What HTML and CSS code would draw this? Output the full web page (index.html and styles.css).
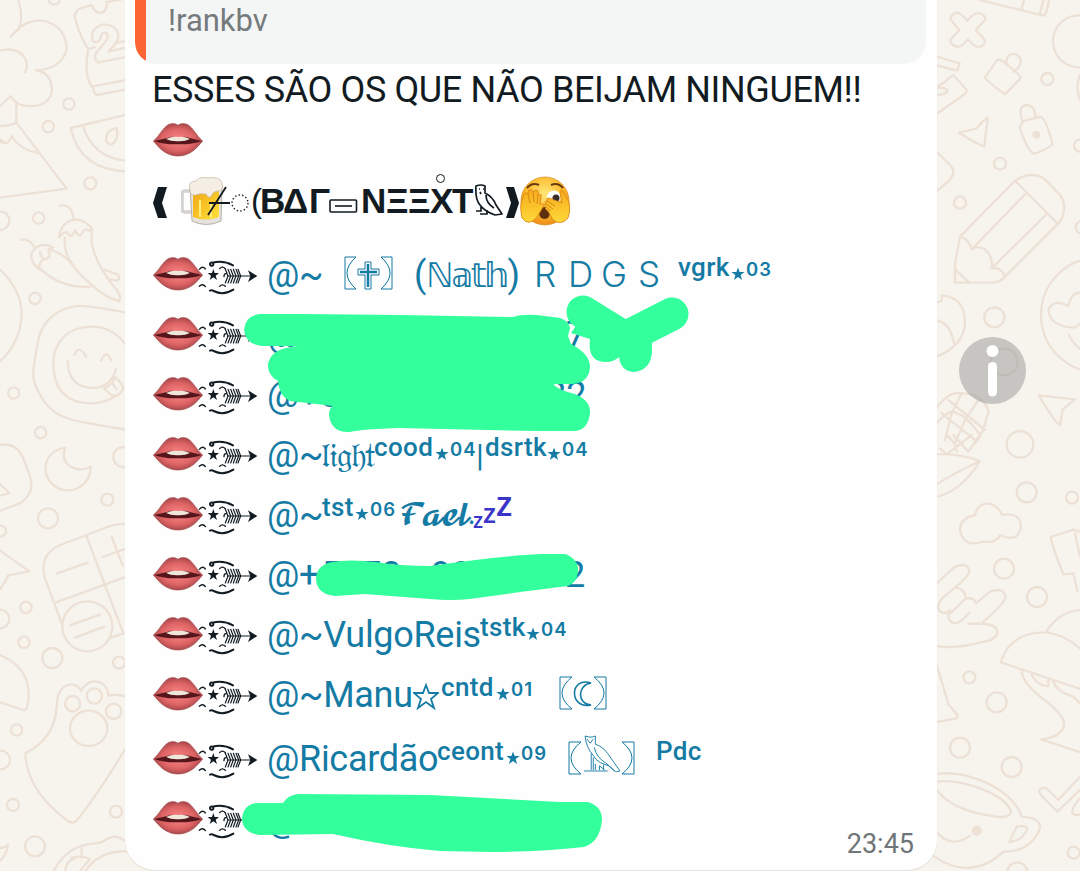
FILE: index.html
```html
<!DOCTYPE html>
<html lang="pt-BR">
<head>
<meta charset="utf-8">
<title>Chat</title>
<link rel="stylesheet" href="styles.css">
</head>
<body>
<svg class="defs" width="0" height="0" aria-hidden="true">
  <defs>
    <radialGradient id="lipg" cx=".5" cy=".5" r=".55"><stop offset="0" stop-color="#f98686"/><stop offset=".6" stop-color="#de6465"/><stop offset="1" stop-color="#9c4044"/></radialGradient>
    <linearGradient id="beerg" x1="0" x2="1" y1="0" y2="1"><stop offset="0" stop-color="#f0a613"/><stop offset="1" stop-color="#ffe23c"/></linearGradient>
    <radialGradient id="faceg" cx=".5" cy=".35" r=".65"><stop offset="0" stop-color="#ffe77a"/><stop offset=".6" stop-color="#fdbb2c"/><stop offset="1" stop-color="#ee8c1a"/></radialGradient>
    <linearGradient id="handg" x1="0" x2="0" y1="0" y2="1"><stop offset="0" stop-color="#f6a91c"/><stop offset="1" stop-color="#ffd93a"/></linearGradient>
    <symbol id="lips" viewBox="38 52 150 102">
      <path d="M39 106C58 92 72 54 95 54Q106 53 113 59Q120 53 131 54C154 54 168 92 187 106C170 126 150 151 113 151S56 126 39 106Z" fill="url(#lipg)" stroke="#9c4548" stroke-width="2"/>
      <path d="M42 106Q76 98 92 93Q113 96 134 93Q155 98 184 106Q155 117 113 116Q70 117 42 106Z" fill="#54161a"/>
      <path d="M77 100Q94 92 113 94Q132 92 149 100Q134 108 113 107Q92 108 77 100Z" fill="#efe6dc"/>
    </symbol>
    <symbol id="arrow" viewBox="174 42 180 123">
      <g fill="none" stroke="#111b21" stroke-width="4" stroke-linecap="round">
        <path d="M178 88Q188 76 196 87M178 139Q188 129 196 140M239 86Q247 77 256 86M239 139Q247 130 256 139M252 110Q252 100 259 101"/>
        <path d="M220 72a5 5 0 1 1-3-4Q250 60 279 76" stroke-width="6"/><path d="M210 152Q216 149 221 153Q250 168 280 149" stroke-width="6"/>
        <path d="M262 108H335" stroke-width="3"/>
        <path d="M256 88l8 20l-8 21M264 88l8 20l-8 21M272 88l8 20l-8 21M280 88l8 20l-8 21M288 88l8 20l-8 21M294 88l8 20l-8 21" stroke-width="3.500"/>
      </g>
      <path d="M324 91L352 108L324 126L331 108ZM220 87l4 12h13l-10 8l4 13l-11-8l-11 8l4-13l-10-8h13z" fill="#111b21"/>
    </symbol>
    <symbol id="star" viewBox="0 0 14 14"><path d="M7 .4l1.600 4.700h5L9.600 8.100l1.500 4.900L7 10.100l-4.100 2.900l1.500-4.900L.4 5.100h5z" fill="currentColor"/></symbol>
    <symbol id="owl" viewBox="0 0 36 36"><path d="M2 1l4 1h3l3-1v8Q19 11 24 18L36 35l-4 1l-7-6l-8-3Q12 24 10 20Q3 12 2 1ZM4 4l3 4l3-4M11 12Q13 22 22 27L31 35M8 18V34M10 22V34M1 35h23M12 34v-6M16 34v-4l5 4M20 29v5" fill="none" stroke="currentColor" stroke-width=".9" stroke-linejoin="round"/></symbol>
  </defs>
</svg>

<svg class="wallpaper" viewBox="0 0 1080 871" aria-hidden="true">
  <g transform="scale(.33333)">
    <path d="M55 0Q72 55 55 88L32 110Q80 50 140 65Q200 85 200 150Q180 210 108 210Q160 220 155 280Q140 320 90 318Q50 320 32 288Q10 310 0 318M0 152Q50 140 72 170Q88 190 76 217M49 305V368L200 566L0 593M0 378Q30 378 50 368M0 424Q25 440 35 408Q60 450 120 460M0 418Q8 420 12 428"/>
    <path d="M275 15L238 26Q222 36 225 55Q240 110 265 148Q250 220 275 260L380 240M275 15Q285 42 305 38Q322 34 320 6L380 -5M280 262Q280 280 290 285L380 268M265 148Q275 142 285 142"/>
    <path d="M278 122Q268 85 310 73Q355 75 355 112Q350 130 325 155L380 142M278 122Q292 134 302 116Q300 98 316 98Q328 104 320 120L288 160Q280 178 295 188L380 170M345 130L380 122"/>
    <path d="M380 344L212 384Q240 510 380 514M248 376Q280 475 380 482M318 415Q320 390 350 384Q358 420 334 434Q318 432 318 415Z"/>
    <circle cx="207" cy="312" r="17"/><circle cx="145" cy="380" r="17"/><circle cx="271" cy="550" r="18"/><circle cx="116" cy="654" r="17"/><circle cx="105" cy="895" r="17"/><circle cx="41" cy="1179" r="17"/><circle cx="0" cy="662" r="28"/><circle cx="163" cy="-3" r="17"/><circle cx="122" cy="1298" r="17"/>
    <path d="M180 617Q215 610 220 655M177 712Q185 660 230 658Q265 665 278 690L265 692Q255 680 243 704Q232 710 225 690Q215 715 207 706Q200 685 177 712ZM195 712Q185 780 270 850Q310 890 358 904Q365 890 350 870Q290 800 275 730V694M315 810L350 822Q365 835 352 842L330 838"/>
    <path d="M62 720Q85 712 103 741M118 808Q85 780 97 755Q112 735 130 735Q150 735 160 743Q140 745 147 755Q155 775 130 778Q122 765 120 755M118 808Q115 790 130 778M120 805Q180 865 270 860M150 748Q185 760 212 785"/>
    <path d="M0 808Q65 870 65 945Q60 1030 0 1084"/>
    <path d="M380 938Q240 910 220 920C150 935 120 980 112 1035C100 1110 85 1135 130 1200Q160 1250 240 1265L380 1290"/>
    <path d="M380 1038Q340 980 275 980C200 980 160 1030 160 1090Q160 1210 275 1210Q320 1208 345 1188M203 1084Q205 1160 275 1164Q335 1162 348 1106M223 1065Q238 1030 258 1070M303 1082Q318 1045 334 1082M312 1165Q345 1150 342 1130Q365 1145 370 1165Q350 1200 330 1182ZM336 1148L348 1166"/>
  </g>
  <g transform="translate(0 435) scale(.33333)">
    <path d="M0 30Q50 20 72 75L90 125Q105 170 65 202L0 228M0 147L28 174L0 182M196 38C130 50 120 115 160 150C210 190 275 150 272 95Q245 110 218 98Q180 80 196 38ZM0 347L88 409L25 421Q15 440 0 463"/>
    <path d="M380 268Q340 265 300 285L180 330Q115 360 135 430L185 565M260 305L370 595L332 608M168 502L380 425M170 416L263 383M308 366L380 340M335 305L368 392M210 571L300 539M225 608L313 575"/>
    <circle cx="262" cy="574" r="75"/><circle cx="144" cy="250" r="30"/><circle cx="322" cy="194" r="18"/><circle cx="370" cy="66" r="30"/><circle cx="78" cy="517" r="17"/><circle cx="72" cy="622" r="17"/><circle cx="157" cy="669" r="30"/><circle cx="357" cy="683" r="18"/><circle cx="50" cy="885" r="17"/><circle cx="39" cy="1110" r="18"/><circle cx="348" cy="1130" r="18"/><circle cx="105" cy="1234" r="30"/><circle cx="2" cy="975" r="28"/><circle cx="0" cy="552" r="28"/><circle cx="2" cy="288" r="16"/>
    <path d="M0 660Q95 700 85 795Q82 830 70 825L0 802M380 935Q280 1100 228 1158Q215 1168 200 1155Q80 1065 76 955Q165 910 170 815Q172 750 215 748Q235 750 243 768Q265 730 300 742Q325 755 325 782Q350 775 380 786"/>
    <circle cx="218" cy="806" r="23"/><circle cx="283" cy="783" r="23"/><circle cx="341" cy="829" r="23"/><ellipse cx="266" cy="880" rx="56" ry="53"/>
    <path d="M160 1310Q200 1230 285 1225Q305 1225 320 1212Q345 1195 380 1220M245 1240V1268M215 1268Q245 1260 270 1272L240 1308M255 1310Q300 1240 400 1250M195 1310Q200 1275 225 1270M0 1238Q18 1240 24 1228Q20 1260 0 1277"/>
  </g>
  <g transform="translate(925 0) scale(.33333)">
    <path d="M165 0L355 47Q365 45 372 0M290 25L297 0M345 40L355 0"/>
    <path d="M78 60Q70 50 95 38Q105 35 127 62Q150 35 165 40Q188 50 178 62L152 90L178 118Q185 135 160 142Q150 142 128 118Q110 142 95 140Q70 130 78 118L103 90Z"/>
    <path d="M30 168L104 190L97 212L30 195M30 345L120 282Q130 272 118 262L85 225L60 245L30 265M30 285Q65 285 68 270Q55 260 30 265M215 182L180 232Q180 240 240 283L286 235Q290 225 225 178ZM243 190Q245 160 270 162Q300 175 278 205L265 215M188 354L178 438Q165 438 102 398L155 385Q180 355 188 354ZM300 362L345 350Q362 352 382 430Q385 440 330 461Q310 460 285 385Q285 370 300 362ZM293 365Q275 315 308 315Q330 318 332 352M30 450L75 495Q95 515 75 540L30 578"/>
    <circle cx="334" cy="404" r="8" fill="#ede1d6"/><circle cx="367" cy="237" r="18"/><circle cx="225" cy="491" r="18"/><circle cx="105" cy="608" r="18"/><circle cx="208" cy="952" r="30"/><circle cx="462" cy="124" r="78"/><circle cx="465" cy="437" r="18"/><circle cx="470" cy="682" r="18"/><circle cx="238" cy="1086" r="40"/>
    <path d="M465 225Q450 260 465 300M90 848V790L105 710L270 542Q320 510 360 538L405 585Q430 620 405 665L235 835Q225 845 210 847ZM270 542L400 673M300 583L140 748Q130 715 105 710M140 748Q155 735 180 748Q205 770 200 805L362 645M200 805Q230 800 240 830M90 808L130 845M30 905Q55 910 50 887Q120 890 120 970Q115 1040 30 1072M30 960Q75 965 87 1030"/>
    <circle cx="520" cy="945" r="172"/><path d="M475 880Q440 870 430 918Q385 895 370 930Q375 980 450 983L480 960M432 1005Q450 1040 475 1053"/>
    <path d="M341 1186L450 1198L413 1228L405 1275Q395 1275 341 1186ZM30 1230Q70 1170 115 1180Q150 1180 170 1202Q200 1230 185 1250Q180 1290 150 1330M30 1275Q60 1240 80 1235Q120 1240 165 1305M70 1200L180 1290M50 1240L150 1320M110 1180L80 1240L60 1320M160 1200L120 1260L90 1330"/>
  </g>
  <g transform="translate(840 435) scale(.33333)">
    <path d="M280 60Q340 50 420 78Q360 175 280 187M420 78Q330 120 280 155M300 40L320 58L395 0M340 0L385 50L420 0M320 0Q350 25 350 50"/>
    <circle cx="540" cy="28" r="40"/><circle cx="560" cy="172" r="30"/><circle cx="696" cy="188" r="18"/><circle cx="492" cy="401" r="30"/><circle cx="591" cy="486" r="30"/><circle cx="388" cy="727" r="18"/><circle cx="470" cy="802" r="30"/><circle cx="360" cy="938" r="30"/><circle cx="515" cy="996" r="30"/><circle cx="701" cy="1253" r="18"/><circle cx="532" cy="1312" r="30"/>
    <path d="M405 240Q412 205 445 206Q475 210 486 240Q540 230 543 275Q535 325 480 300Q470 325 430 320Q370 340 360 285Q360 250 405 240ZM720 290L700 284L632 306Q635 330 670 418L700 415L712 468M720 365L705 295"/>
    <path d="M285 450L345 395Q385 380 388 410Q380 430 345 458L310 487Q285 510 300 530Q320 540 330 525M345 458Q375 460 378 490L325 540Q325 565 350 565Q370 555 388 533M378 490Q400 485 408 505L450 470Q490 455 497 485Q495 505 430 560M385 567Q470 560 472 590Q470 615 430 620Q340 645 285 632"/>
    <path d="M620 588Q660 525 730 525M482 682Q510 590 620 592Q680 600 730 650M482 682L730 765M545 710Q550 750 620 800Q670 840 672 865Q672 905 604 913L730 955M575 720Q595 755 625 753L625 735M640 740Q650 770 700 785L725 810M290 690Q315 770 325 808L352 840Q355 852 340 852L285 862"/>
    <path d="M285 1018C370 1000 520 1060 545 1145Q610 1150 598 1185Q570 1250 490 1250C430 1310 350 1315 280 1262M285 1040C370 1030 500 1080 513 1130Q510 1150 470 1145Q340 1130 290 1065M285 1185Q330 1245 390 1202M508 1222L530 1175Q560 1170 562 1180Q550 1215 508 1222ZM597 1070Q600 1055 620 1060L655 1095L730 1015M597 1070Q600 1080 652 1130L730 1055M730 1080Q690 1120 698 1135Q705 1145 730 1135"/>
    <circle cx="410" cy="1187" r="12" fill="#ede1d6"/>
  </g>
</svg>

<main class="bubble">
  <div class="quote"><p>!rankbv</p></div>
  <p class="headline">ESSES SÃO OS QUE NÃO BEIJAM NINGUEM!!</p>
  <div class="kiss"><svg class="lips"><use href="#lips"/></svg></div>
  <div class="title">
    <svg class="edge" width="15" height="32" viewBox="0 0 15 32"><path d="M5 0h9L9 16L14 31H5L0 16Z" fill="#111b21"/></svg>
    <svg class="beer" width="75" height="50" viewBox="0 0 75 50">
      <path d="M11 15H4Q1 15 1 18V33Q1 36 4 36H11" fill="none" stroke="#d3d2cf" stroke-width="3.500"/>
      <path d="M9 10H41L40 45Q25 52 11 45Z" fill="#e6e3dc" stroke="#b5afa7"/>
      <path d="M12 15H38V41Q25 46 12 41Z" fill="url(#beerg)"/>
      <path d="M19 24V41M30 26V42" stroke="#ffef7c" stroke-width="2"/>
      <path d="M9 14Q6 5 15 5Q19 0 26 2Q39 0 41 7Q43 14 38 15Q32 15 31 19Q28 24 25 18Q19 17 15 19Q9 20 9 14Z" fill="#f4eee4" stroke="#c9bca9" stroke-width=".8"/>
      <path d="M28 27H49M27 39L45 11" stroke="#111b21" stroke-width="1.800"/><circle cx="59" cy="27" r="8" fill="none" stroke="#111b21" stroke-width="1.400" stroke-dasharray="1.400 2.200"/>
    </svg>
    <span class="paren">(</span><span>B</span><span>Δ</span><span>Γ</span>
    <svg class="plate" width="29" height="15" viewBox="0 0 29 15"><rect x="1" y="1" width="26.500" height="12" rx="1" fill="none" stroke="#111b21" stroke-width="1.600"/><path d="M6 7H23" stroke="#111b21" stroke-width="1.600"/></svg>
    <span>N</span><span>Ξ</span><span>Ξ</span><span class="ring">X</span><span>T</span>
    <svg class="bird" width="29" height="33" viewBox="0 0 29 33"><path d="M2 2Q7 0 11 2V9Q19 13 22 21L28 30L21 31Q10 27 6 21Q1 15 2 2ZM5 5h1M9 5h1M6 8l1 2M12 11Q12 19 20 24M7 23V27H2M13 26V30H6" fill="none" stroke="#111b21" stroke-width="1.700" stroke-linejoin="round"/></svg>
    <svg class="edge" width="16" height="32" viewBox="0 0 16 32"><path d="M1 0h8L14 16L9 31H1L6 16Z" fill="#111b21"/></svg>
    <svg class="peek" width="50" height="50" viewBox="0 0 50 50">
      <circle cx="25" cy="25" r="24" fill="url(#faceg)" stroke="#d98a25" stroke-width=".7"/>
      <path d="M7 12Q12 6 19 9M31 9Q38 6 43 12" fill="none" stroke="#6a3b10" stroke-width="2.200"/>
      <ellipse cx="34" cy="21" rx="7" ry="6.500" fill="#fff"/><circle cx="36" cy="22" r="3.500" fill="#362b27"/>
      <ellipse cx="24.500" cy="37" rx="5.500" ry="6" fill="#5e3010"/>
      <path d="M2 42Q-1 28 3 22L4 18Q6 15 8 18L9 14Q12 12 13 16L16 14Q19 14 18 19Q22 17 21 21L20 28Q26 27 23 31L17 41Q9 51 2 42ZM48 42Q52 30 47 22L43 15Q40 13 40 17L42 27L29 22Q26 22 27 25Q24 25 26 28Q23 28 26 31Q24 33 28 35L33 44Q41 50 48 42Z" fill="url(#handg)" stroke="#d98713" stroke-width=".9"/>
      <path d="M8 18L10 27M13 16L14 26M18 19L17 28M27 25L35 30M26 28L33 33M26 31L31 35" fill="none" stroke="#d98713"/>
    </svg>
  </div>

  <ul class="rank">
    <li><svg class="lips"><use href="#lips"/></svg><svg class="arrow"><use href="#arrow"/></svg>
      <div class="name n1"><span>@~</span>
        <svg width="51" height="34" viewBox="0 0 51 34" class="box"><path d="M13 1H2V33H13Q-5 17 13 1ZM38 1H49V33H38Q56 17 38 1Z"/><path d="M22 6h6v7h8v6h-8v14h-6V19h-7v-6h7z"/><path d="M25 8V31M17 16H34" stroke-width="2.500"/></svg>
        <span class="dbl"><i>(</i><em>ℕ𝕒𝕥𝕙</em><i>)</i></span><span class="wide"><b>R</b><b>D</b><b>G</b><b>S</b></span><span class="sup">vgrk</span><svg class="star"><use href="#star"/></svg><span class="num">03</span></div></li>
    <li><svg class="lips"><use href="#lips"/></svg><svg class="arrow"><use href="#arrow"/></svg>
      <div class="name n2"><span>@</span><span>7</span></div></li>
    <li><svg class="lips"><use href="#lips"/></svg><svg class="arrow"><use href="#arrow"/></svg>
      <div class="name n3"><span>@+5</span><span>22</span></div></li>
    <li><svg class="lips"><use href="#lips"/></svg><svg class="arrow"><use href="#arrow"/></svg>
      <div class="name n4"><span>@~</span><span class="frak">𝔩𝔦𝔤𝔥𝔱</span><span class="sup">cood</span><svg class="star"><use href="#star"/></svg><span class="num">04</span><span class="bar">|</span><span class="sup">dsrtk</span><svg class="star"><use href="#star"/></svg><span class="num">04</span></div></li>
    <li><svg class="lips"><use href="#lips"/></svg><svg class="arrow"><use href="#arrow"/></svg>
      <div class="name n5"><span>@~</span><span class="sup">tst</span><svg class="star"><use href="#star"/></svg><span class="num">06</span><span class="script">𝓕𝓪𝓮𝓵.</span><span class="zzz"><i>z</i><i>z</i><i>z</i></span></div></li>
    <li><svg class="lips"><use href="#lips"/></svg><svg class="arrow"><use href="#arrow"/></svg>
      <div class="name n6"><span>@+</span><span>5</span><span>73</span><span>99</span><span>2</span></div></li>
    <li><svg class="lips"><use href="#lips"/></svg><svg class="arrow"><use href="#arrow"/></svg>
      <div class="name n7"><span>@~VulgoReis</span><span class="sup">tstk</span><svg class="star"><use href="#star"/></svg><span class="num">04</span></div></li>
    <li><svg class="lips"><use href="#lips"/></svg><svg class="arrow"><use href="#arrow"/></svg>
      <div class="name n8"><span>@~Manu</span><svg width="26" height="28" viewBox="0 0 26 28" class="hollow"><path d="M13 3l3 8h9l-7 6l3 9l-8-6l-8 6l3-9l-7-6h9z"/></svg><span class="sup">cntd</span><svg class="star"><use href="#star"/></svg><span class="num">01</span>
        <svg width="48" height="34" viewBox="0 0 48 34" class="box moon"><path d="M13 1H1V33H13Q-7 17 13 1ZM35 1H47V33H35Q55 17 35 1Z"/><path d="M32 7C10 0 10 34 32 29C18 28 18 9 32 7Z" stroke-width="1.600"/></svg></div></li>
    <li class="spaced"><svg class="lips"><use href="#lips"/></svg><svg class="arrow"><use href="#arrow"/></svg>
      <div class="name n9"><span>@Ricardão</span><span class="sup">ceont</span><svg class="star"><use href="#star"/></svg><span class="num">09</span>
        <svg width="67" height="40" viewBox="0 0 67 40" class="box tall"><path d="M13 7H1V39H13Q-7 23 13 7ZM54 7H66V39H54Q74 23 54 7Z"/><use href="#owl" x="15" y="0" width="37" height="37"/></svg>
        <span class="sup">Pdc</span></div></li>
    <li><svg class="lips"><use href="#lips"/></svg><svg class="arrow"><use href="#arrow"/></svg>
      <div class="name n2"><span>@</span></div></li>
  </ul>
  <time>23:45</time>
</main>

<svg class="marker" viewBox="0 0 1080 871" aria-hidden="true">
  <path d="M260 314H300L400 315L513 317Q525 313 545 316L560 318Q569 321 570 328L568 336L571 344Q590 354 590 367Q589 383 572 384H553Q558 390 575 394Q591 401 590 413Q588 430 575 431H535L400 428Q362 429 350 432Q331 433 329 415Q329 408 333 406L290 401Q279 396 278 381Q267 375 268 364Q271 351 286 348L298 346H262Q245 344 244 330Q245 316 260 314Z"/>
  <path d="M583 312L625 338L672 314" fill="none" stroke="#33ff9c" stroke-width="33" stroke-linecap="round" stroke-linejoin="round"/>
  <path d="M571 333L590 339Q587 362 606 362Q614 362 619 357Q621 372 635 372Q651 369 652 352L652 338L620 320L580 320Z"/>
  <path d="M332 562Q350 559 375 562Q400 566 430 566Q500 556 540 554H565Q579 559 578 572Q577 582 568 586L520 592L470 599Q450 601 430 599L365 594L335 596Q316 594 316 578Q317 565 332 562Z"/>
  <path d="M283 803Q288 795 298 794L430 795L560 802H588Q602 806 602 820Q600 842 584 847Q540 852 490 852L440 851Q390 847 333 834L260 835Q243 833 242 819Q243 805 256 803Z"/>
</svg>

<button class="info" aria-label="Info"><svg width="67" height="67" viewBox="0 0 67 67"><circle cx="33.500" cy="14" r="6" fill="#fff"/><rect x="29" y="25" width="9" height="34.500" rx="4.500" fill="#fff"/></svg></button>
</body>
</html>
```
FILE: styles.css
```css
* { box-sizing: border-box; }
body {
  margin: 0;
  width: 1080px;
  height: 871px;
  overflow: hidden;
  position: relative;
  background: #f7f4ee;
  font-family: Roboto, "Noto Sans", "DejaVu Sans", sans-serif;
  color: #111b21;
}
p, ul { margin: 0; padding: 0; }
svg { display: block; flex: none; }
.defs { position: absolute; }
.wallpaper {
  position: absolute;
  inset: 0;
  width: 1080px;
  height: 871px;
}
.wallpaper g {
  fill: none;
  stroke: #ede1d6;
  stroke-width: 7;
  stroke-linecap: round;
  stroke-linejoin: round;
}
.bubble {
  position: relative;
  margin-left: 125px;
  width: 812px;
  height: 870px;
  background: #fefefe;
  border-radius: 0 0 30px 30px;
  box-shadow: 0 1px 1px #e3ddd5;
}
.quote {
  margin: 0 11px 0 10px;
  height: 64px;
  overflow: hidden;
  border-radius: 0 0 22px 22px;
  background: linear-gradient(90deg, #fd6634 11px, #f4f6f6 11px);
}
.quote p {
  padding-left: 33px;
  font-size: 31px;
  line-height: 42px;
  color: #757a7d;
}
.headline {
  height: 50px;
  padding-left: 27px;
  font-size: 36px;
  line-height: 52px;
  letter-spacing: -.38px;
  white-space: nowrap;
}
.lips { width: 50px; height: 34px; }
.kiss {
  height: 52px;
  padding-left: 28px;
  display: flex;
  align-items: center;
}
.title {
  display: grid;
  grid-template-columns: 28px 71px 8px 23px 26px 20px 32px 25px 22px 22px 22px 22px 31px 15px 50px;
  align-items: center;
  height: 70px;
  margin: 0 0 8px 28px;
  font: 700 35px/70px "Liberation Sans", Arial, sans-serif;
}
.edge { margin-top: 3px; }
.plate { margin-top: 10px; }
.bird { margin-top: -2px; }
.paren { margin-left: -1px; font-weight: 400; font-size: 33px; letter-spacing: -2px; }
.ring { position: relative; }
.ring::after {
  content: "";
  position: absolute;
  left: 6px;
  top: 8px;
  width: 7px;
  height: 7px;
  border: 1.500px solid #111b21;
  border-radius: 50%;
}
.rank { list-style: none; }
.rank li {
  display: flex;
  align-items: flex-start;
  height: 60px;
  padding-left: 28px;
}
.rank .spaced { margin-top: 4px; }
.rank .lips { margin-top: 13px; }
.arrow { width: 60px; height: 41px; margin: 10px 0 0 -5px; }
.name {
  display: grid;
  margin-left: 9px;
  height: 60px;
  color: #147ba4;
  font-size: 36px;
  line-height: 62px;
  white-space: nowrap;
}
.n1 { grid-template-columns: 74px 73px 120px 144px 53px 15px 30px; }
.n2 { grid-template-columns: 299px 30px; }
.n3 { grid-template-columns: 279px 50px; }
.n4 { grid-template-columns: 54px 53px 61px 15px 26px 9px 62px 15px 30px; }
.n5 { grid-template-columns: 55px 33px 15px 29px 74px 40px; }
.n6 { grid-template-columns: 54px 40px 70px 134px 30px; }
.n7 { grid-template-columns: 213px 46px 15px 30px; }
.n8 { grid-template-columns: 146px 28px 55px 15px 47px 50px; }
.n9 { grid-template-columns: 170px 69px 15px 46px 89px 50px; }
.name > span:first-child { letter-spacing: -.3px; }
.name i, .name em { font-style: normal; }
.sup { font-size: 26px; font-weight: 500; line-height: 46px; letter-spacing: .35px; }
.num { font: 600 18.500px/50px Inter, sans-serif; letter-spacing: 1.100px; }
.star { width: 14px; height: 14px; margin-top: 23px; }
.box { margin: 12px 0 0 2px; fill: none; stroke: currentColor; stroke-width: 1; }
.moon { margin-left: 1px; }
.tall { margin-top: 7px; margin-left: 1px; }
.hollow { margin-top: 18px; fill: none; stroke: currentColor; stroke-width: 1.800; }
.dbl em { font-family: "DejaVu Sans", sans-serif; font-size: 34px; letter-spacing: -2.600px; margin-right: 1px; }
.wide { display: grid; grid-template-columns: 34px 33px 37px 34px; font-family: Inter, sans-serif; font-size: 35px; line-height: 61px; }
.wide b { font-weight: 350; }
.frak { font-family: "DejaVu Sans", sans-serif; font-size: 34px; letter-spacing: -1px; }
.script { font-family: "DejaVu Math TeX Gyre", "DejaVu Serif", serif; font-size: 27px; line-height: 66px; letter-spacing: -6.200px; }
.bar { font-size: 32px; }
.zzz { display: flex; color: #3a35c8; font-family: "Open Sans", sans-serif; font-weight: 600; }
.zzz i:nth-child(1) { font-size: 21px; line-height: 73px; }
.zzz i:nth-child(2) { font-size: 27px; line-height: 57px; }
.zzz i:nth-child(3) { font-size: 34px; line-height: 38px; }
time {
  position: absolute;
  right: 23px;
  bottom: 10px;
  font-size: 27px;
  line-height: 32px;
  color: #6f7578;
}
.marker {
  position: absolute;
  inset: 0;
  width: 1080px;
  height: 871px;
  fill: #33ff9c;
}
.info {
  position: absolute;
  left: 959px;
  top: 337px;
  width: 67px;
  height: 67px;
  padding: 0;
  border: 0;
  border-radius: 50%;
  background: rgba(150, 150, 150, .5);
}
```
